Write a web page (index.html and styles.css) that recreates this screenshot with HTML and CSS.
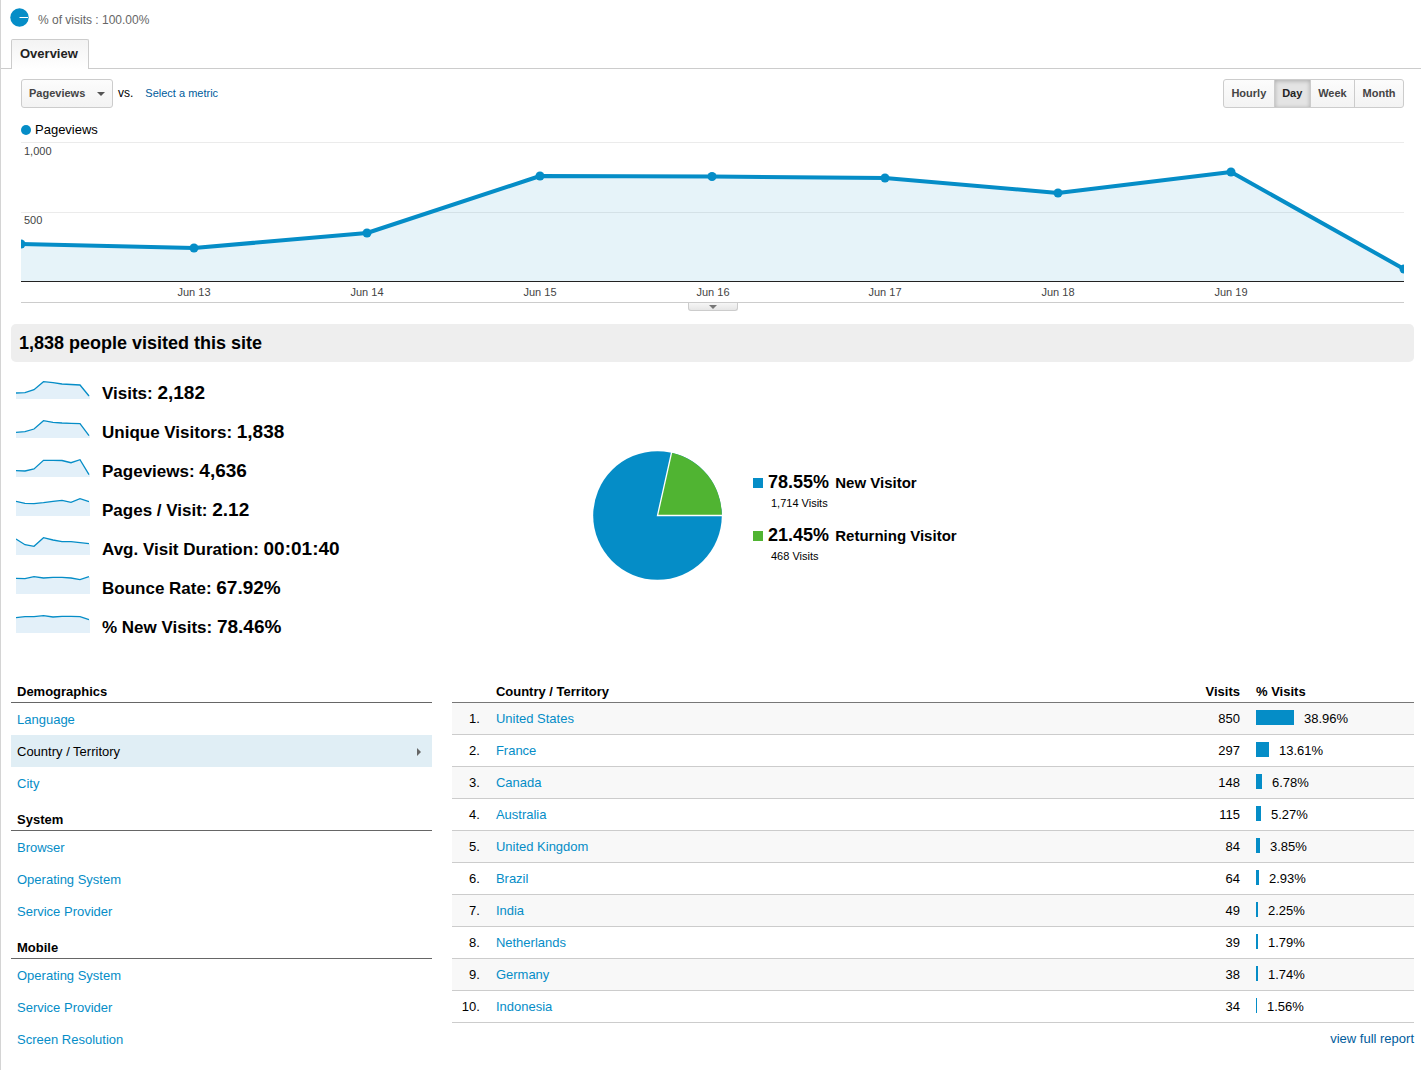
FILE: index.html
```html
<!DOCTYPE html>
<html lang="en">

<head>
  <meta charset="UTF-8">
  <meta name="viewport" content="width=device-width, initial-scale=1.0">
  <title>Visitors Overview</title>
  <link rel="stylesheet" href="styles.css">
</head>

<body>
  <div class="segment">
    <svg class="segment-icon" width="19" height="19" viewBox="0 0 19 19">
      <circle cx="9.5" cy="9.5" r="9.2" fill="#058dc7" />
      <path d="M9.5 9.5H18" stroke="#fff" />
    </svg>
    <span>% of visits : 100.00%</span>
  </div>

  <nav class="tabs">
    <a class="tab" href="#">Overview</a>
  </nav>

  <section class="chart">
    <div class="toolbar">
      <div class="metric-select">
        <select aria-label="Metric">
          <option>Pageviews</option>
          <option>Visits</option>
          <option>Unique Visitors</option>
        </select>
      </div>
      <span class="vs">vs.</span>
      <a class="pick-metric" href="#">Select a metric</a>
      <div class="range">
        <button type="button">Hourly</button>
        <button type="button" class="active">Day</button>
        <button type="button">Week</button>
        <button type="button">Month</button>
      </div>
    </div>

    <div class="legend"><span class="dot"></span>Pageviews</div>

    <svg class="graph" viewBox="0 0 1383 162">
      <path d="M0 2.5H1383M0 72.5H1383" stroke="#ebebeb" />
      <path d="M0 104L173 108L346 93L519 36L691 36.500L864 38L1037 53L1210 32L1383 129V141H0Z" fill="#058dc7" fill-opacity=".1" />
      <path d="M0 141.500H1383" stroke="#222" />
      <path d="M0 104L173 108L346 93L519 36L691 36.500L864 38L1037 53L1210 32L1383 129" fill="none" stroke="#058dc7" stroke-width="4" stroke-linejoin="round" />
      <g fill="#058dc7">
        <circle cx="0" cy="104" r="4.500" />
        <circle cx="173" cy="108" r="4.500" />
        <circle cx="346" cy="93" r="4.500" />
        <circle cx="519" cy="36" r="4.500" />
        <circle cx="691" cy="36.500" r="4.500" />
        <circle cx="864" cy="38" r="4.500" />
        <circle cx="1037" cy="53" r="4.500" />
        <circle cx="1210" cy="32" r="4.500" />
        <circle cx="1383" cy="129" r="4.500" />
      </g>
      <g class="y-labels">
        <text x="3" y="15">1,000</text>
        <text x="3" y="84">500</text>
      </g>
      <g class="x-labels">
        <text x="173" y="156">Jun 13</text>
        <text x="346" y="156">Jun 14</text>
        <text x="519" y="156">Jun 15</text>
        <text x="692" y="156">Jun 16</text>
        <text x="864" y="156">Jun 17</text>
        <text x="1037" y="156">Jun 18</text>
        <text x="1210" y="156">Jun 19</text>
      </g>
    </svg>

    <div class="drawer">
      <button type="button" class="handle" aria-label="Show annotations"></button>
    </div>
  </section>

  <main>
    <h1>1,838 people visited this site</h1>

    <section class="summary">
      <ul class="metrics">
        <li>
          <svg class="spark" viewBox="0 0 74 19">
            <path class="area" d="M0 13L9 13L18 10L28 2L37 3L46 4L55 4.500L64 5L74 16V19H0Z" />
            <path class="line" d="M0 13L9 12.700L18 9.700L27.500 1.700L37 2.700L46 4L55 4.500L64 5L73 16" />
          </svg>
          <span>Visits: <b>2,182</b></span>
        </li>
        <li>
          <svg class="spark" viewBox="0 0 74 19">
            <path class="area" d="M0 13L9 13L18 10L28 2L37 3L46 4L55 4L64 5L74 17V19H0Z" />
            <path class="line" d="M0 13.300L9 12.700L18 10L27.500 1.700L37 3.300L46 4L55 4.300L64 4.700L73 16.700" />
          </svg>
          <span>Unique Visitors: <b>1,838</b></span>
        </li>
        <li>
          <svg class="spark" viewBox="0 0 74 19">
            <path class="area" d="M0 13L9 13L18 11L28 2L37 2L46 2L55 5L64 2L74 17V19H0Z" />
            <path class="line" d="M0 12.700L9 13L18 11L27.500 2.300L37 2.300L46 2.500L55 4.700L64 1.700L73 16.700" />
          </svg>
          <span>Pageviews: <b>4,636</b></span>
        </li>
        <li>
          <svg class="spark" viewBox="0 0 74 19">
            <path class="area" d="M0 4L9 6L18 7L28 6L37 4L46 3L55 5L64 2L74 5V19H0Z" />
            <path class="line" d="M0 4.300L9 6.300L18 6.700L27.500 5.700L37 4.300L46 3.300L55 5.300L64 1.700L73 4.700" />
          </svg>
          <span>Pages / Visit: <b>2.12</b></span>
        </li>
        <li>
          <svg class="spark" viewBox="0 0 74 19">
            <path class="area" d="M0 3L9 9L18 10L28 2L37 4L46 6L55 6L64 7L74 8V19H0Z" />
            <path class="line" d="M0 3L9 8.700L18 10.300L27.500 1.700L37 4L46 5.700L55 5.700L64 6.700L73 7.700" />
          </svg>
          <span>Avg. Visit Duration: <b>00:01:40</b></span>
        </li>
        <li>
          <svg class="spark" viewBox="0 0 74 19">
            <path class="area" d="M0 3L9 4L18 2L28 3L37 2L46 2L55 3L64 5L74 2V19H0Z" />
            <path class="line" d="M0 3.300L9 3.700L18 1.700L27.500 3L37 2.300L46 2.300L55 3L64 4.700L73 1.700" />
          </svg>
          <span>Bounce Rate: <b>67.92%</b></span>
        </li>
        <li>
          <svg class="spark" viewBox="0 0 74 19">
            <path class="area" d="M0 4L9 3L18 3L28 2L37 3L46 2L55 2L64 3L74 6V19H0Z" />
            <path class="line" d="M0 3.700L9 2.700L18 2.700L27.500 1.700L37 3L46 2.300L55 2.300L64 2.700L73 5.700" />
          </svg>
          <span>% New Visits: <b>78.46%</b></span>
        </li>
      </ul>

      <div class="visitors">
        <svg class="pie" width="129" height="129" viewBox="0 0 129 129">
          <circle cx="64.500" cy="64.500" r="64.300" fill="#058dc7" />
          <path d="M64.500 64.500L78.700 1.800A64.300 64.300 0 0 1 128.800 64.500Z" fill="#50b432" />
          <path d="M78.900 0L64.500 64.500H129" fill="none" stroke="#fff" stroke-width="1.300" />
        </svg>
        <ul class="pie-legend">
          <li>
            <div class="type"><span class="swatch new"></span><b>78.55%</b> New Visitor</div>
            <div class="count">1,714 Visits</div>
          </li>
          <li>
            <div class="type"><span class="swatch returning"></span><b>21.45%</b> Returning Visitor</div>
            <div class="count">468 Visits</div>
          </li>
        </ul>
      </div>
    </section>

    <section class="details">
      <nav class="dimensions">
        <h2>Demographics</h2>
        <a href="#">Language</a>
        <a href="#" class="selected">Country / Territory</a>
        <a href="#">City</a>
        <h2>System</h2>
        <a href="#">Browser</a>
        <a href="#">Operating System</a>
        <a href="#">Service Provider</a>
        <h2>Mobile</h2>
        <a href="#">Operating System</a>
        <a href="#">Service Provider</a>
        <a href="#">Screen Resolution</a>
      </nav>

      <div class="report">
        <table>
          <thead>
            <tr>
              <th class="rank"></th>
              <th>Country / Territory</th>
              <th class="visits">Visits</th>
              <th class="percent">% Visits</th>
            </tr>
          </thead>
          <tbody>
            <tr>
              <td class="rank">1.</td>
              <td><a href="#">United States</a></td>
              <td class="visits">850</td>
              <td class="percent"><span class="bar" style="width: 38px"></span>38.96%</td>
            </tr>
            <tr>
              <td class="rank">2.</td>
              <td><a href="#">France</a></td>
              <td class="visits">297</td>
              <td class="percent"><span class="bar" style="width: 13px"></span>13.61%</td>
            </tr>
            <tr>
              <td class="rank">3.</td>
              <td><a href="#">Canada</a></td>
              <td class="visits">148</td>
              <td class="percent"><span class="bar" style="width: 6px"></span>6.78%</td>
            </tr>
            <tr>
              <td class="rank">4.</td>
              <td><a href="#">Australia</a></td>
              <td class="visits">115</td>
              <td class="percent"><span class="bar" style="width: 5px"></span>5.27%</td>
            </tr>
            <tr>
              <td class="rank">5.</td>
              <td><a href="#">United Kingdom</a></td>
              <td class="visits">84</td>
              <td class="percent"><span class="bar" style="width: 4px"></span>3.85%</td>
            </tr>
            <tr>
              <td class="rank">6.</td>
              <td><a href="#">Brazil</a></td>
              <td class="visits">64</td>
              <td class="percent"><span class="bar" style="width: 3px"></span>2.93%</td>
            </tr>
            <tr>
              <td class="rank">7.</td>
              <td><a href="#">India</a></td>
              <td class="visits">49</td>
              <td class="percent"><span class="bar" style="width: 2px"></span>2.25%</td>
            </tr>
            <tr>
              <td class="rank">8.</td>
              <td><a href="#">Netherlands</a></td>
              <td class="visits">39</td>
              <td class="percent"><span class="bar" style="width: 2px"></span>1.79%</td>
            </tr>
            <tr>
              <td class="rank">9.</td>
              <td><a href="#">Germany</a></td>
              <td class="visits">38</td>
              <td class="percent"><span class="bar" style="width: 2px"></span>1.74%</td>
            </tr>
            <tr>
              <td class="rank">10.</td>
              <td><a href="#">Indonesia</a></td>
              <td class="visits">34</td>
              <td class="percent"><span class="bar" style="width: 1px"></span>1.56%</td>
            </tr>
          </tbody>
        </table>
        <a class="full-report" href="#">view full report</a>
      </div>
    </section>
  </main>
</body>

</html>
```

FILE: styles.css
```css
* {
  margin: 0;
  padding: 0;
  box-sizing: border-box;
}

body {
  min-height: 100vh;
  border-left: 1px solid #d4d4d4;
  background: #fff;
  color: #000;
  font-family: "Liberation Sans", Arial, sans-serif;
  font-size: 13px;
}

a {
  color: #058dc7;
  text-decoration: none;
}

a:hover {
  text-decoration: underline;
}

ul {
  list-style: none;
}

svg {
  display: block;
}

.segment {
  display: flex;
  align-items: flex-start;
  gap: 9px;
  padding: 8px 9px 0;
  height: 39px;
  color: #666;
  font-size: 12px;
  line-height: 24px;
}

/* Tabs */
.tabs {
  display: flex;
  padding-left: 10px;
  border-bottom: 1px solid #ccc;
}

.tab {
  padding: 0 10px 2px 8px;
  margin-bottom: -1px;
  border: 1px solid #ccc;
  border-bottom: 0;
  border-radius: 2px 2px 0 0;
  background: linear-gradient(#f3f3f3, #fff);
  color: #222;
  font-weight: bold;
  line-height: 27px;
}

/* Chart */
.chart {
  padding: 10px 17px 0 20px;
}

.toolbar {
  display: flex;
  align-items: center;
  line-height: 13px;
}

.metric-select {
  position: relative;
}

.metric-select::after {
  content: "";
  position: absolute;
  top: 13px;
  right: 8px;
  border: 4px solid transparent;
  border-top-color: #555;
  border-bottom: 0;
  pointer-events: none;
}

.metric-select select,
.range button {
  height: 29px;
  padding: 0 7px 1px;
  border: 1px solid #ccc;
  background: linear-gradient(#fcfcfc, #f3f3f3);
  color: #444;
  font-family: inherit;
  font-size: 11px;
  font-weight: bold;
}

.metric-select select {
  appearance: none;
  display: block;
  width: 92px;
  border-radius: 3px;
}

.vs {
  margin: 0 12px 0 5px;
  font-size: 12px;
}

.pick-metric {
  color: #005c9c;
  font-size: 11px;
}

.range {
  display: flex;
  width: 181px;
  margin-left: auto;
}

.range button {
  flex: 1 1 auto;
}

.range button + button {
  margin-left: -1px;
}

.range button:first-child {
  border-radius: 3px 0 0 3px;
}

.range button:last-child {
  border-radius: 0 3px 3px 0;
}

.range .active {
  background: #e4e4e4;
  box-shadow: inset 0 1px 4px rgba(0, 0, 0, 0.25);
  color: #222;
}

.legend {
  display: flex;
  align-items: center;
  gap: 4px;
  padding-top: 11px;
  line-height: 21px;
}

.dot {
  width: 10px;
  height: 10px;
  border-radius: 50%;
  background: #058dc7;
}

.graph {
  width: 100%;
  font-size: 11px;
  fill: #444;
}

.x-labels {
  text-anchor: middle;
}

.drawer {
  height: 22px;
  border-top: 1px solid #ccc;
}

.handle {
  display: flex;
  align-items: center;
  justify-content: center;
  width: 50px;
  height: 8px;
  margin: 0 auto;
  border: 1px solid #ccc;
  border-top: 0;
  border-radius: 0 0 3px 3px;
  background: linear-gradient(#f6f6f6, #e6e6e6);
}

.handle::before {
  content: "";
  border: 4px solid transparent;
  border-top-color: #777;
  border-bottom: 0;
}

/* Summary */
main {
  padding: 0 7px 15px 10px;
}

h1 {
  padding: 0 8px;
  border-radius: 5px;
  background: #eee;
  font-size: 18px;
  line-height: 38px;
}

.summary {
  display: grid;
  grid-template-columns: minmax(340px, 582px) 1fr;
  align-items: center;
  padding: 12px 0 24px;
}

.metrics li {
  display: flex;
  align-items: baseline;
  gap: 12px;
  padding-left: 5px;
  font-size: 17px;
  font-weight: bold;
  line-height: 39px;
}

.metrics b {
  font-size: 19px;
  line-height: 1;
}

.spark {
  width: 74px;
  height: 19px;
}

.spark .area {
  fill: #e3f0f9;
}

.spark .line {
  fill: none;
  stroke: #058dc7;
  stroke-width: 1.3;
}

.visitors {
  display: flex;
  align-items: center;
  gap: 31px;
  padding-top: 10px;
}

.pie-legend {
  display: grid;
  gap: 11px;
  padding-top: 4px;
}

.type {
  font-size: 15px;
  font-weight: bold;
  line-height: 24px;
}

.type b {
  margin-right: 2px;
  font-size: 18px;
}

.swatch {
  display: inline-block;
  width: 10px;
  height: 10px;
  margin-right: 5px;
}

.new {
  background: #058dc7;
}

.returning {
  background: #50b432;
}

.count {
  padding-left: 18px;
  font-size: 11px;
  line-height: 17px;
}

/* Details */
.details {
  display: grid;
  grid-template-columns: 30% 1fr;
  gap: 20px;
}

.dimensions {
  display: flex;
  flex-direction: column;
}

.dimensions h2 {
  padding: 10px 6px 0;
  border-bottom: 1px solid #666;
  font-size: 13px;
  line-height: 21px;
}

.dimensions a {
  display: flex;
  align-items: center;
  justify-content: space-between;
  padding: 1px 11px 0 6px;
  line-height: 31px;
}

.dimensions .selected {
  background: #e0eef5;
  color: #000;
}

.selected::after {
  content: "";
  border: 4px solid transparent;
  border-left-color: #666;
  border-right: 0;
}

table {
  width: 100%;
  table-layout: fixed;
  border-collapse: separate;
  border-spacing: 0;
}

th,
td {
  padding: 0 8px;
  text-align: left;
}

th {
  padding-top: 10px;
  border-bottom: 1px solid #777;
  line-height: 21px;
}

td {
  padding-top: 1px;
  border-bottom: 1px solid #ccc;
  line-height: 30px;
}

tbody tr:nth-child(odd) {
  background: #f8f8f8;
}

.rank {
  width: 36px;
  text-align: right;
}

.visits {
  width: 80px;
  text-align: right;
}

.percent {
  width: 166px;
}

.bar {
  display: inline-block;
  height: 15px;
  margin-right: 10px;
  background: #058dc7;
  vertical-align: -2px;
}

.full-report {
  display: block;
  color: #005c9c;
  line-height: 32px;
  text-align: right;
}
```
